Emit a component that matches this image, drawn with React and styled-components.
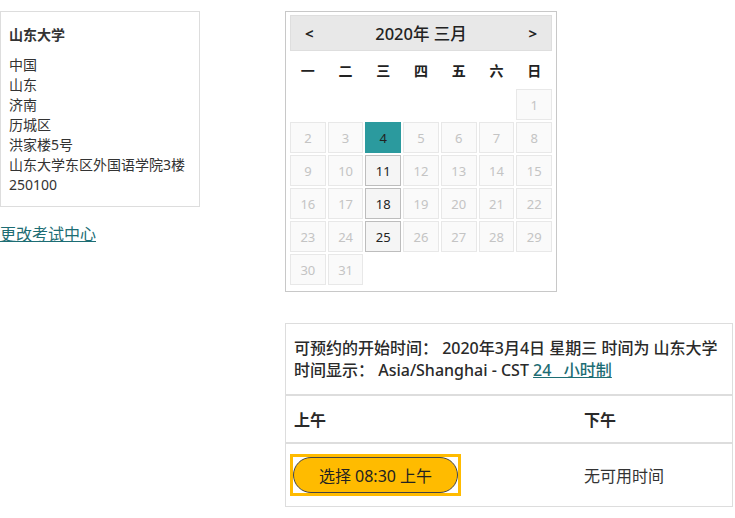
import styled, { createGlobalStyle } from "styled-components";

const GlobalStyle = createGlobalStyle`
body {
  margin: 0;
  background: #fff;
  font-family: "Noto Sans", "Noto Sans CJK SC", sans-serif;
  color: #333;
}
`;

const weekdays = ["一", "二", "三", "四", "五", "六", "日"];
const available = [11, 18, 25];

const App = () => {
  const cells = [];
  for (let i = 0; i < 6; i++) cells.push(null);
  for (let d = 1; d <= 31; d++) cells.push(d);

  return (
    <Page>
      <GlobalStyle />
      <LeftColumn>
        <AddressBox>
          <AddressTitle>山东大学</AddressTitle>
          <AddressLine>中国</AddressLine>
          <AddressLine>山东</AddressLine>
          <AddressLine>济南</AddressLine>
          <AddressLine>历城区</AddressLine>
          <AddressLine>洪家楼5号</AddressLine>
          <AddressLine>山东大学东区外国语学院3楼</AddressLine>
          <AddressLine>250100</AddressLine>
        </AddressBox>
        <ChangeLink href="#">更改考试中心</ChangeLink>
      </LeftColumn>

      <RightColumn>
        <Calendar>
          <CalendarHeader>
            <NavArrow>&lt;</NavArrow>
            <MonthTitle>2020年 三月</MonthTitle>
            <NavArrow>&gt;</NavArrow>
          </CalendarHeader>
          <WeekRow>
            {weekdays.map((w) => (
              <Weekday key={w}>{w}</Weekday>
            ))}
          </WeekRow>
          <DayGrid>
            {cells.map((d, i) =>
              d === null ? (
                <EmptyCell key={"e" + i} />
              ) : (
                <DayCell
                  key={d}
                  $selected={d === 4}
                  $available={available.includes(d)}
                >
                  {d}
                </DayCell>
              )
            )}
          </DayGrid>
        </Calendar>

        <TimeTable>
          <InfoRow>
            <InfoLine>可预约的开始时间： 2020年3月4日 星期三 时间为 山东大学</InfoLine>
            <InfoLine>
              时间显示： Asia/Shanghai - CST <HourLink href="#">24&nbsp;&nbsp;&nbsp;小时制</HourLink>
            </InfoLine>
          </InfoRow>
          <TableRow $height={46}>
            <MorningCol>
              <ColHead>上午</ColHead>
            </MorningCol>
            <AfternoonCol>
              <ColHead>下午</ColHead>
            </AfternoonCol>
          </TableRow>
          <TableRow $height={62} $last>
            <MorningCol>
              <FocusRing>
                <SlotButton>选择 08:30 上午</SlotButton>
              </FocusRing>
            </MorningCol>
            <AfternoonCol>
              <NoTime>无可用时间</NoTime>
            </AfternoonCol>
          </TableRow>
        </TimeTable>
      </RightColumn>
    </Page>
  );
};

export default App;

const Page = styled.div`
display: flex;
align-items: flex-start;
padding-top: 11px;
`;

const LeftColumn = styled.div`
width: 200px;
display: flex;
flex-direction: column;
`;

const AddressBox = styled.div`
border: 1px solid #ddd;
padding: 13px 8px 11px 8px;
font-size: 14px;
line-height: 20px;
`;

const AddressTitle = styled.div`
font-weight: 700;
margin-bottom: 10px;
`;

const AddressLine = styled.div`
white-space: nowrap;
`;

const ChangeLink = styled.a`
margin-top: 17px;
font-size: 16px;
line-height: 20px;
color: #1d6d74;
text-decoration: underline;
`;

const RightColumn = styled.div`
margin-left: 85px;
width: 448px;
display: flex;
flex-direction: column;
`;

const Calendar = styled.div`
width: 272px;
box-sizing: border-box;
border: 1px solid #c8c8c8;
padding: 3px 4px 6px 4px;
`;

const CalendarHeader = styled.div`
height: 36px;
box-sizing: border-box;
background: #e8e8e8;
border: 1px solid #dedede;
display: flex;
align-items: center;
justify-content: space-between;
padding: 0 14px 0 14px;
`;

const NavArrow = styled.span`
font-size: 15px;
font-weight: 700;
color: #222;
`;

const MonthTitle = styled.span`
font-size: 16.5px;
font-weight: 500;
color: #222;
`;

const WeekRow = styled.div`
display: grid;
grid-template-columns: repeat(7, 1fr);
gap: 2px;
height: 38px;
align-items: center;
`;

const Weekday = styled.div`
text-align: center;
font-size: 14px;
font-weight: 700;
color: #222;
`;

const DayGrid = styled.div`
display: grid;
grid-template-columns: repeat(7, 1fr);
grid-auto-rows: 31px;
gap: 2px 2px;
`;

const EmptyCell = styled.div``;

const DayCell = styled.div`
box-sizing: border-box;
display: flex;
align-items: center;
justify-content: center;
font-size: 13px;
border: 1px solid ${(p) => (p.$selected ? "#2b9a9e" : p.$available ? "#bdbdbd" : "#e8e8e8")};
background: ${(p) => (p.$selected ? "#2b9a9e" : p.$available ? "#f5f5f5" : "#fafafa")};
color: ${(p) => (p.$selected || p.$available ? "#222" : "#c4c4c4")};
`;

const TimeTable = styled.div`
margin-top: 31px;
border: 1px solid #ddd;
display: flex;
flex-direction: column;
`;

const InfoRow = styled.div`
padding: 13px 8px 13px 8px;
border-bottom: 2px solid #ddd;
font-size: 16px;
font-weight: 500;
line-height: 22px;
color: #2a2a2a;
`;

const InfoLine = styled.div`
white-space: nowrap;
`;

const HourLink = styled.a`
color: #1d6d74;
text-decoration: underline;
`;

const TableRow = styled.div`
display: flex;
height: ${(p) => p.$height}px;
border-bottom: ${(p) => (p.$last ? "none" : "2px solid #ddd")};
`;

const MorningCol = styled.div`
box-sizing: border-box;
width: 290px;
display: flex;
align-items: center;
padding-left: 8px;
`;

const AfternoonCol = styled.div`
box-sizing: border-box;
flex: 1;
display: flex;
align-items: center;
padding-left: 8px;
`;

const ColHead = styled.span`
font-size: 16px;
font-weight: 700;
color: #2a2a2a;
`;

const FocusRing = styled.div`
display: inline-flex;
margin-left: -4px;
border: 3px solid #ffbb00;
background: #fff;
`;

const SlotButton = styled.button`
width: 165px;
height: 36px;
border-radius: 18px;
border: 1px solid #444;
background: #ffbb00;
font-family: inherit;
font-size: 16px;
color: #222;
cursor: pointer;
`;

const NoTime = styled.span`
font-size: 16px;
`;
